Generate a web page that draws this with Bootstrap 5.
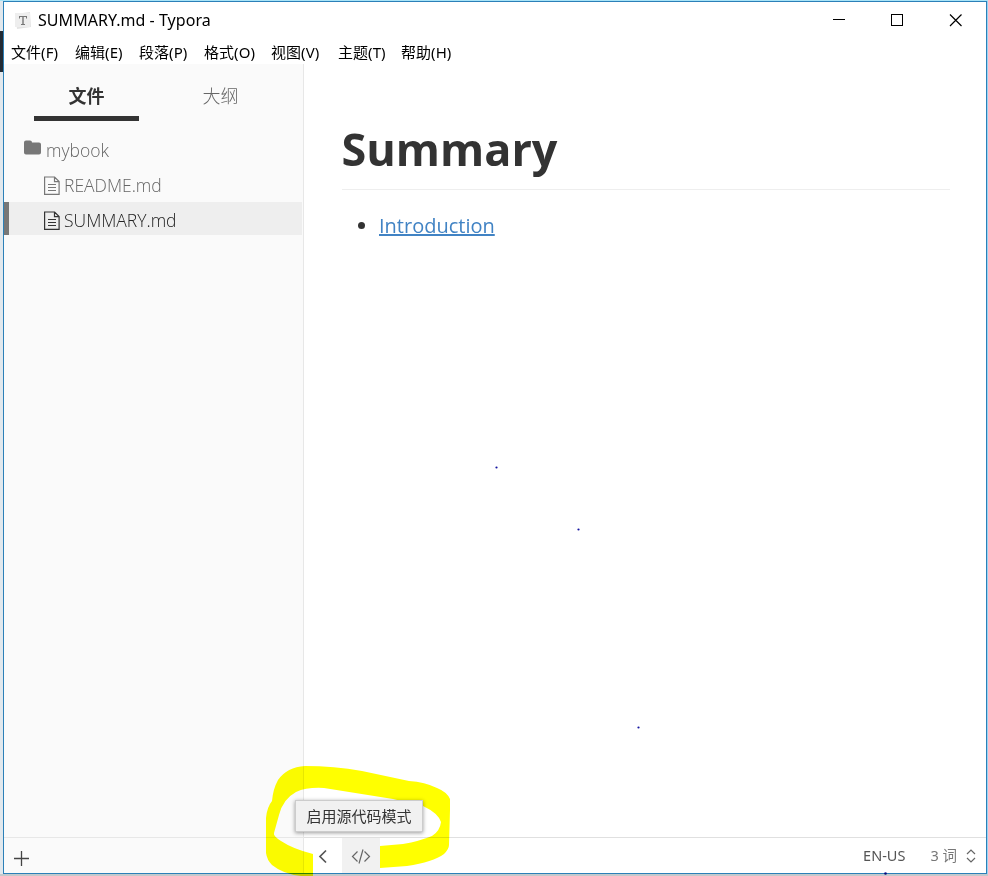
<!DOCTYPE html>
<html lang="zh-CN">
<head>
<meta charset="utf-8">
<title>SUMMARY.md - Typora</title>
<link href="https://cdn.jsdelivr.net/npm/bootstrap@5.3.0/dist/css/bootstrap.min.css" rel="stylesheet">
<style>
body{width:988px;height:876px;overflow:hidden;background:#b9e4f7;font-family:"Noto Sans","Noto Sans CJK SC",sans-serif;color:#000;padding:1px 1px 2px 3px;
 background:linear-gradient(#222b35,#222b35) 0 31px/3px 41px no-repeat,linear-gradient(#c4c9cc,#c4c9cc) 0 874px/988px 2px no-repeat,linear-gradient(#a8e4f8,#a8e4f8) 0 0/988px 1px no-repeat,linear-gradient(#9bd3f3,#9bd3f3) 987px 0/1px 876px no-repeat,#e1e8ed}
.window{width:984px;height:873px;border:1px solid #2c80b8;background:#fff}
.titlebar{height:36px;padding-left:11px}
.titletext{font-size:16px;letter-spacing:.05px;margin-left:7px;line-height:36px}
.winbtns svg{display:block}
.menubar{height:26px;font-size:15px;line-height:28px;padding-left:7px}
.menubar a{color:#000;text-decoration:none;white-space:nowrap;letter-spacing:.05px}
.side{width:300px;background:#fafafa;border-right:1px solid #e7e7e7}
.tabs{height:57px;padding-left:30px;gap:29px}
.tabs a{width:105px;height:57px;text-align:center;font-size:18px;line-height:64px;color:#666;font-weight:300;text-decoration:none}
.tabs a.current{color:#333;font-weight:700;border-bottom:5px solid #333}
.tree{padding-top:11px;font-family:"Open Sans","Noto Sans",sans-serif;font-size:17.5px;font-weight:300;color:#666}
.node{height:33px;margin-bottom:2px;padding-top:3px;width:298px;line-height:30px;white-space:nowrap}
.leaf{padding-left:35px;border-left:5px solid transparent}
.leaf svg{margin-right:4px}
.leaf.open{background:#eee;border-left-color:#777;color:#222}
.sidefoot{height:36px;border-top:1px solid #e7e7e7;padding:5px 0 0 10px}
.doc{padding:58px 36px 0 38px;font-family:"Open Sans",sans-serif;color:#333}
.doc h1{font-size:45px;font-weight:700;line-height:54px;height:68px;border-bottom:1px solid #eee;margin:0 0 20px -.5px}
.doc ul{padding-left:37px;font-size:20px;line-height:32px}
.doc a{color:#4183c4;text-decoration:underline}
.status{height:36px;border-top:1px solid #e0e0e0;color:#555;font-size:14.5px}
.words{margin:0 9px 0 25px;color:#777}
.updown{margin-right:10px}
.codebtn{width:38px;height:35px;background:#f1f1f1}
.tip{left:295px;top:800px;width:128px;height:32px;background:#f1f1f1;border:1px solid #ccc;box-shadow:0 1px 4px #0006;font-size:15px;line-height:30px;color:#333;text-align:center}
.ink{left:0;top:0;mix-blend-mode:multiply;pointer-events:none}
</style>
<script src="https://cdn.jsdelivr.net/npm/bootstrap@5.3.0/dist/js/bootstrap.bundle.min.js"></script>
</head>
<body class="position-relative">
<div class="window d-flex flex-column">
 <header class="titlebar d-flex align-items-center flex-shrink-0">
  <svg width="16" height="17" viewBox="0 0 16 17"><path d="M0 2 15 0l1 15-14 2z" fill="#e4e4e4"/><path d="M0 1h15v14H0z" fill="#eee"/><path d="M4 4h8v2.500h-1V5H8.700v7H10v1H6v-1h1.300V5H5v1.500H4z" fill="#777"/></svg>
  <span class="titletext">SUMMARY.md - Typora</span>
  <div class="winbtns ms-auto d-flex"><svg width="155" height="36" viewBox="831 2 155 36" fill="none" stroke="#000" shape-rendering="crispEdges"><path d="M833 19.500h12M891.500 14.500h11v11h-11z"/><path shape-rendering="auto" stroke-width="1.200" d="m950 14.500 11.500 11.500m0-11.500L950 26"/></svg></div>
 </header>
 <nav class="menubar d-flex flex-shrink-0">
  <a href="#" style="width:64px">文件(F)</a><a href="#" style="width:64px">编辑(E)</a><a href="#" style="width:65px">段落(P)</a><a href="#" style="width:67px">格式(O)</a><a href="#" style="width:67px">视图(V)</a><a href="#" style="width:63px">主题(T)</a><a href="#">帮助(H)</a>
 </nav>
 <div class="d-flex flex-grow-1">
  <aside class="side d-flex flex-column flex-shrink-0">
   <div class="tabs d-flex"><a href="#" class="current">文件</a><a href="#">大纲</a></div>
   <div class="tree flex-grow-1">
    <div class="node d-flex align-items-center ps-3"><svg class="ms-1 me-1 mb-1" width="18" height="16" viewBox="0 0 18 16"><path d="M0 2.500Q0 .5 2 .5h4q2 0 2 2h7q2 0 2 2v8q0 2-2 2H2q-2 0-2-2z" fill="#777"/></svg><span>mybook</span></div>
    <div class="node leaf d-flex align-items-center"><svg width="16" height="19" viewBox="0 0 16 19" fill="none" stroke="#777" stroke-width="1.200"><path d="M.6 1h10l4.500 4.500v12.800H.6zM10.500 1v4.700h4.600M4 8.500h8M4 11.500h8M4 14.500h8"/></svg><span>README.md</span></div>
    <div class="node leaf open d-flex align-items-center"><svg width="16" height="19" viewBox="0 0 16 19" fill="none" stroke="#333" stroke-width="1.200"><path d="M.6 1h10l4.500 4.500v12.800H.6zM10.500 1v4.700h4.600M4 8.500h8M4 11.500h8M4 14.500h8"/></svg><span>SUMMARY.md</span></div>
   </div>
   <div class="sidefoot"><svg class="d-block" width="15" height="30" viewBox="0 0 15 30" stroke="#444" stroke-width="1.300"><path d="M0 15.500h15M7.500 8v15"/></svg></div>
  </aside>
  <main class="d-flex flex-column flex-grow-1">
   <article class="doc flex-grow-1"><h1>Summary</h1><ul><li><a href="#">Introduction</a></li></ul></article>
   <footer class="status d-flex align-items-center">
    <svg width="38" height="35" viewBox="304 838 38 35" fill="none" stroke="#555" stroke-width="1.700"><path d="m326 850.500-6 6 6 6"/></svg>
    <span class="codebtn"><svg class="d-block" width="38" height="35" viewBox="342 838 38 35" fill="none" stroke="#666" stroke-width="1.200"><path d="m357.500 851.500-5 5 5 5m7-10 5 5-5 5m-1.500-12-4 14"/></svg></span>
    <span class="ms-auto">EN-US</span><span class="words">3 词</span>
    <svg class="updown" width="10" height="16" viewBox="0 0 10 16" fill="none" stroke="#666" stroke-width="1.200"><path d="m1 6 4-4 4 4M1 10l4 4 4-4"/></svg>
   </footer>
  </main>
 </div>
</div>
<svg class="ink position-absolute" width="988" height="876"><path fill="#ff0" fill-rule="evenodd" d="M305 766Q287 767 278 780Q273 789 272 801Q267 807 266 818V853Q267 860 272 865Q283 874 301 876H313V854Q293 849 281 841Q273 836 274 833L279 815Q283 799 296 792Q307 787 324 788L393 799L423 806Q438 813 441 822Q440 831 432 836Q420 841 403 844L380 846V868L407 866Q433 862 444 854Q449 849 449 845L450 810V799Q447 792 437 788Q425 782 409 781L362 771Q334 766 305 766Z"/><g fill="#1414a0"><circle cx="496.500" cy="467.500" r="1.100"/><circle cx="578.500" cy="529.500" r="1.100"/><circle cx="638.500" cy="727.500" r="1.100"/><circle cx="885.500" cy="873.500" r="1.300"/></g></svg>
<div class="tip position-absolute">启用源代码模式</div>
</body>
</html>
